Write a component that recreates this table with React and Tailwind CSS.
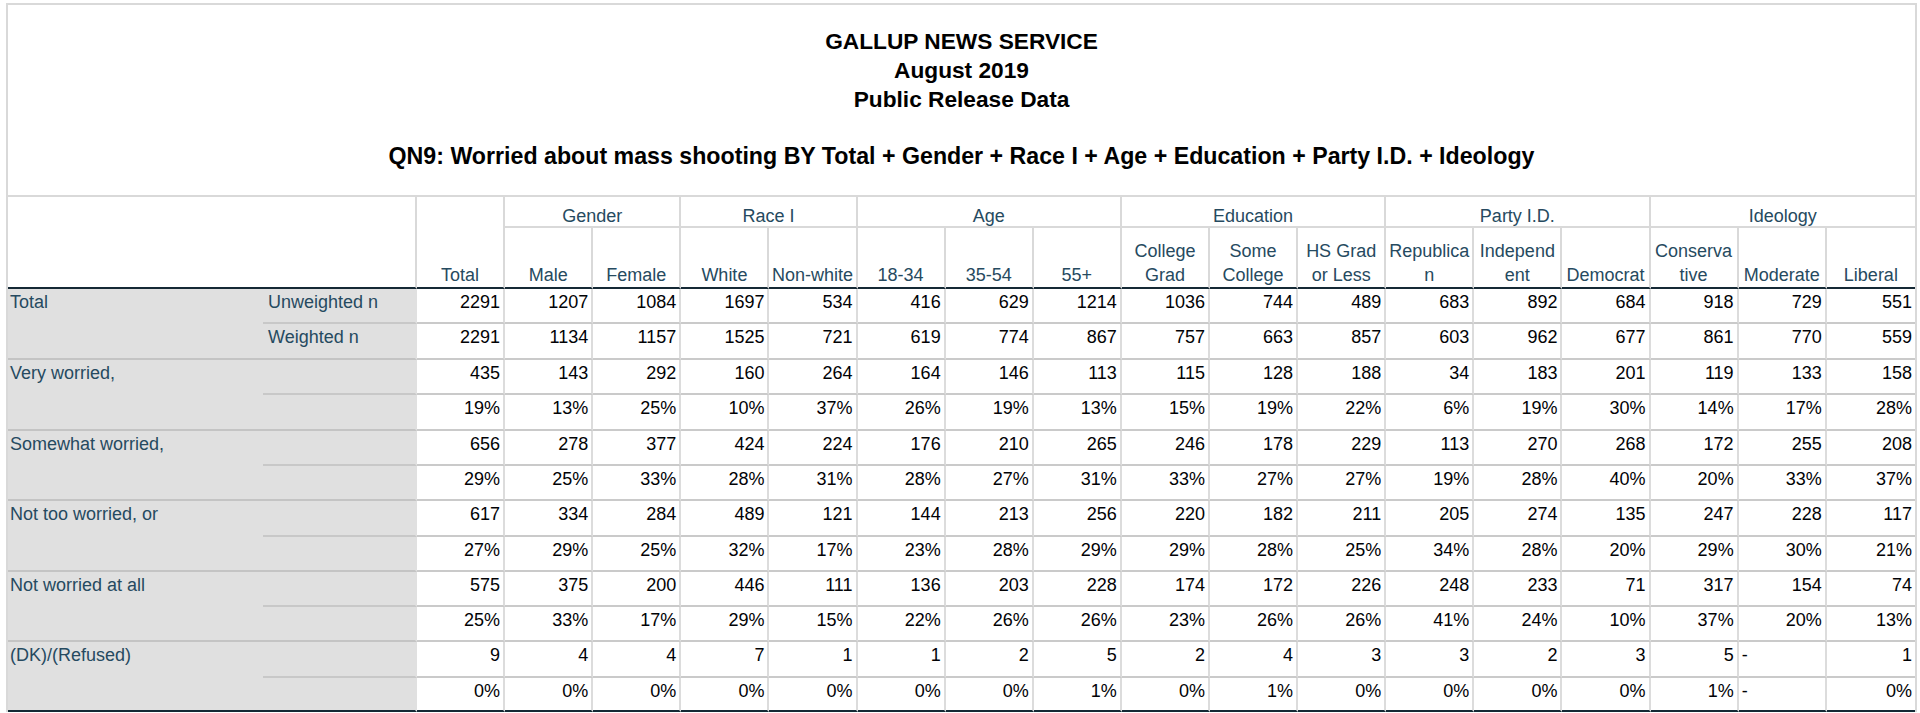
const GROUPS = [
  ["Gender", 2],
  ["Race I", 2],
  ["Age", 3],
  ["Education", 3],
  ["Party I.D.", 3],
  ["Ideology", 3],
];

const SUBS = [
  ["Male"],
  ["Female"],
  ["White"],
  ["Non-white"],
  ["18-34"],
  ["35-54"],
  ["55+"],
  ["College", "Grad"],
  ["Some", "College"],
  ["HS Grad", "or Less"],
  ["Republica", "n"],
  ["Independ", "ent"],
  ["Democrat"],
  ["Conserva", "tive"],
  ["Moderate"],
  ["Liberal"],
];

const pct = (arr) => arr.map((v) => (v === null ? "-" : v + "%"));

const ROWS = [
  {
    label: "Total",
    sub: ["Unweighted n", "Weighted n"],
    h: ["h-[35px]", "h-[36px]"],
    vals: [
      [2291, 1207, 1084, 1697, 534, 416, 629, 1214, 1036, 744, 489, 683, 892, 684, 918, 729, 551],
      [2291, 1134, 1157, 1525, 721, 619, 774, 867, 757, 663, 857, 603, 962, 677, 861, 770, 559],
    ],
  },
  {
    label: "Very worried,",
    sub: ["", ""],
    h: ["h-[35px]", "h-[36px]"],
    vals: [
      [435, 143, 292, 160, 264, 164, 146, 113, 115, 128, 188, 34, 183, 201, 119, 133, 158],
      pct([19, 13, 25, 10, 37, 26, 19, 13, 15, 19, 22, 6, 19, 30, 14, 17, 28]),
    ],
  },
  {
    label: "Somewhat worried,",
    sub: ["", ""],
    h: ["h-[35px]", "h-[35px]"],
    vals: [
      [656, 278, 377, 424, 224, 176, 210, 265, 246, 178, 229, 113, 270, 268, 172, 255, 208],
      pct([29, 25, 33, 28, 31, 28, 27, 31, 33, 27, 27, 19, 28, 40, 20, 33, 37]),
    ],
  },
  {
    label: "Not too worried, or",
    sub: ["", ""],
    h: ["h-[36px]", "h-[35px]"],
    vals: [
      [617, 334, 284, 489, 121, 144, 213, 256, 220, 182, 211, 205, 274, 135, 247, 228, 117],
      pct([27, 29, 25, 32, 17, 23, 28, 29, 29, 28, 25, 34, 28, 20, 29, 30, 21]),
    ],
  },
  {
    label: "Not worried at all",
    sub: ["", ""],
    h: ["h-[35px]", "h-[35px]"],
    vals: [
      [575, 375, 200, 446, 111, 136, 203, 228, 174, 172, 226, 248, 233, 71, 317, 154, 74],
      pct([25, 33, 17, 29, 15, 22, 26, 26, 23, 26, 26, 41, 24, 10, 37, 20, 13]),
    ],
  },
  {
    label: "(DK)/(Refused)",
    sub: ["", ""],
    h: ["h-[36px]", "h-[34px]"],
    vals: [
      [9, 4, 4, 7, 1, 1, 2, 5, 2, 4, 3, 3, 2, 3, 5, "-", 1],
      pct([0, 0, 0, 0, 0, 0, 0, 1, 0, 1, 0, 0, 0, 0, 1, null, 0]),
    ],
  },
];

function HeaderCells() {
  return (
    <thead>
      <tr>
        <th
          colSpan={2}
          rowSpan={2}
          className="border-r-2 border-b-2 border-r-[#d9d9d9] border-b-[#152935] bg-white"
        />
        <th
          rowSpan={2}
          className="border-r-2 border-b-2 border-r-[#d9d9d9] border-b-[#152935] px-[2px] align-bottom text-center font-normal leading-[24px] text-[#264a60]"
        >
          Total
        </th>
        {GROUPS.map(([name, span], i) => (
          <th
            key={name}
            colSpan={span}
            className={
              "h-[31px] border-b-2 border-[#d9d9d9] align-bottom text-center font-normal leading-[20px] text-[#264a60] " +
              (i < GROUPS.length - 1 ? "border-r-2" : "")
            }
          >
            {name}
          </th>
        ))}
      </tr>
      <tr>
        {SUBS.map((lines, i) => (
          <th
            key={i}
            className={
              "h-[61px] border-b-2 border-b-[#152935] border-r-[#d9d9d9] px-[1px] align-bottom text-center font-normal leading-[24px] text-[#264a60] " +
              (i < SUBS.length - 1 ? "border-r-2" : "")
            }
          >
            {lines.map((l, j) => (
              <div key={j} className="whitespace-nowrap">
                {l}
              </div>
            ))}
          </th>
        ))}
      </tr>
    </thead>
  );
}

function DataCell({ v, last, bottom, h }) {
  const dash = v === "-" || v === "-%";
  return (
    <td
      className={
        h +
        " border-b-2 border-r-[#dcdcdc] align-top pt-[3px] leading-[20px] text-[#010205] whitespace-nowrap " +
        (dash ? "text-left pl-[3px] " : "text-right pr-[3px] ") +
        (last ? "" : "border-r-2 ") +
        (bottom ? "border-b-[#152935]" : "border-b-[#cacaca]")
      }
    >
      {dash ? "-" : v}
    </td>
  );
}

export default function App() {
  return (
    <div className="w-[1920px] h-[713px] overflow-hidden bg-white pl-[6px] pt-[3px] font-['Liberation_Sans',Arial,sans-serif]">
      <div className="w-[1911px] border-x-2 border-t-2 border-[#d9d9d9]">
        <div className="h-[192px] border-b-2 border-[#d9d9d9] pt-[22px] text-center font-bold leading-[29px] text-black">
          <div className="text-[22.7px]">GALLUP NEWS SERVICE</div>
          <div className="text-[22.7px]">August 2019</div>
          <div className="text-[22.7px]">Public Release Data</div>
          <div className="mt-[28px] text-[23.2px]">
            QN9: Worried about mass shooting BY Total + Gender + Race I + Age + Education + Party I.D. + Ideology
          </div>
        </div>
        <table className="w-[1907px] table-fixed border-separate border-spacing-0 text-[18px]">
          <colgroup>
            <col className="w-[255px]" />
            <col className="w-[154px]" />
            {Array.from({ length: 17 }).map((_, i) => (
              <col key={i} />
            ))}
          </colgroup>
          <HeaderCells />
          <tbody>
            {ROWS.map((row, ri) => {
              const lastGroup = ri === ROWS.length - 1;
              return [0, 1].map((k) => (
                <tr key={ri + "-" + k}>
                  {k === 0 && (
                    <td
                      rowSpan={2}
                      className={
                        "border-b-2 bg-[#e0e0e0] pl-[2px] pt-[3px] align-top leading-[20px] text-[#264a60] whitespace-nowrap " +
                        (lastGroup ? "border-b-[#152935]" : "border-b-[#c4c4c4]")
                      }
                    >
                      {row.label}
                    </td>
                  )}
                  <td
                    className={
                      row.h[k] +
                      " border-b-2 border-r-2 border-r-[#e0e0e0] bg-[#e0e0e0] pl-[5px] pt-[3px] align-top leading-[20px] text-[#264a60] whitespace-nowrap " +
                      (lastGroup && k === 1
                        ? "border-b-[#152935]"
                        : k === 1
                        ? "border-b-[#c4c4c4]"
                        : "border-b-[#c8c8c8]")
                    }
                  >
                    {row.sub[k]}
                  </td>
                  {row.vals[k].map((v, ci) => (
                    <DataCell
                      key={ci}
                      v={v}
                      h={row.h[k]}
                      last={ci === 16}
                      bottom={lastGroup && k === 1}
                    />
                  ))}
                </tr>
              ));
            })}
          </tbody>
        </table>
      </div>
    </div>
  );
}
